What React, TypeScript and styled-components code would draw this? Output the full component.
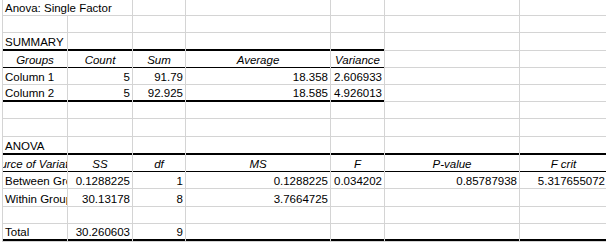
import React from 'react'
import styled, { createGlobalStyle } from 'styled-components'

type Align = 'l' | 'r' | 'c'
type Line = 'grid' | 'thin' | 'thick'

interface CellDef {
  t?: string
  a?: Align
  i?: boolean
  spill?: boolean
}

interface RowDef {
  h: number
  line?: Line
  span?: number
  cells: CellDef[]
}

const COLS = [65, 65, 53, 145, 54, 135, 88]
const GRID = '#d4d4d4'

const head = (t: string): CellDef => ({ t, a: 'c', i: true })
const num = (t: string): CellDef => ({ t, a: 'r' })
const txt = (t: string): CellDef => ({ t, a: 'l' })

const rows: RowDef[] = [
  { h: 16, cells: [{ t: 'Anova: Single Factor', a: 'l', spill: true }] },
  { h: 17, cells: [] },
  { h: 18, line: 'thick', span: 5, cells: [txt('SUMMARY')] },
  { h: 17, line: 'thin', span: 5, cells: [head('Groups'), head('Count'), head('Sum'), head('Average'), head('Variance')] },
  { h: 17, cells: [txt('Column 1'), num('5'), num('91.79'), num('18.358'), num('2.606933')] },
  { h: 17, line: 'thick', span: 5, cells: [txt('Column 2'), num('5'), num('92.925'), num('18.585'), num('4.926013')] },
  { h: 17, cells: [] },
  { h: 18, cells: [] },
  { h: 18, line: 'thick', span: 7, cells: [txt('ANOVA')] },
  {
    h: 17,
    line: 'thin',
    span: 7,
    cells: [head('Source of Variation'), head('SS'), head('df'), head('MS'), head('F'), head('P-value'), head('F crit')],
  },
  {
    h: 17,
    cells: [
      txt('Between Groups'),
      num('0.1288225'),
      num('1'),
      num('0.1288225'),
      num('0.034202'),
      num('0.85787938'),
      num('5.317655072'),
    ],
  },
  { h: 18, cells: [txt('Within Groups'), num('30.13178'), num('8'), num('3.7664725')] },
  { h: 17, cells: [] },
  { h: 17, line: 'thick', span: 7, cells: [txt('Total'), num('30.260603'), num('9')] },
  { h: 1, cells: [] },
]

const App = () => {
  return (
    <>
      <GlobalStyle />
      <Sheet $rows={rows.map((r) => r.h)}>
        {rows.map((row, ri) =>
          COLS.map((_, ci) => {
            const c = row.cells[ci] || {}
            const line: Line = row.line && ci < (row.span || 0) ? row.line : 'grid'
            return (
              <Cell
                key={`${ri}-${ci}`}
                $align={c.a || 'l'}
                $italic={!!c.i}
                $line={line}
                $spill={!!c.spill}
              >
                {c.t && <Value>{c.t}</Value>}
              </Cell>
            )
          })
        )}
      </Sheet>
    </>
  )
}

const GlobalStyle = createGlobalStyle`
  html, body {
    margin: 0;
    padding: 0;
    background: #ffffff;
    overflow: hidden;
  }
  body {
    width: 606px;
    height: 242px;
  }
`

const Sheet = styled.div<{ $rows: number[] }>`
  display: grid;
  grid-template-columns: ${COLS.map((w) => `${w}px`).join(' ')};
  grid-template-rows: ${(p) => p.$rows.map((h) => `${h}px`).join(' ')};
  width: max-content;
  margin-left: 2px;
  border-left: 1px solid ${GRID};
  font-family: 'Liberation Sans', Arial, sans-serif;
  font-size: 11.5px;
  line-height: 13px;
  color: #000000;
`

const Cell = styled.div<{ $align: Align; $italic: boolean; $line: Line; $spill: boolean }>`
  position: relative;
  box-sizing: border-box;
  display: flex;
  align-items: flex-end;
  justify-content: ${(p) => (p.$align === 'r' ? 'flex-end' : p.$align === 'c' ? 'center' : 'flex-start')};
  padding: 0 2px ${(p) => (p.$line === 'thick' ? 2 : 1)}px 2px;
  border-right: 1px solid ${(p) => (p.$spill ? 'transparent' : GRID)};
  overflow: ${(p) => (p.$spill ? 'visible' : 'hidden')};
  font-style: ${(p) => (p.$italic ? 'italic' : 'normal')};
  z-index: ${(p) => (p.$spill ? 1 : 0)};
  &::after {
    content: '';
    position: absolute;
    left: -1px;
    right: -1px;
    bottom: 0;
    height: ${(p) => (p.$line === 'thick' ? 2 : 1)}px;
    background: ${(p) => (p.$line === 'grid' ? GRID : '#000000')};
  }
`

const Value = styled.span`
  white-space: nowrap;
  flex-shrink: 0;
`

export default App
